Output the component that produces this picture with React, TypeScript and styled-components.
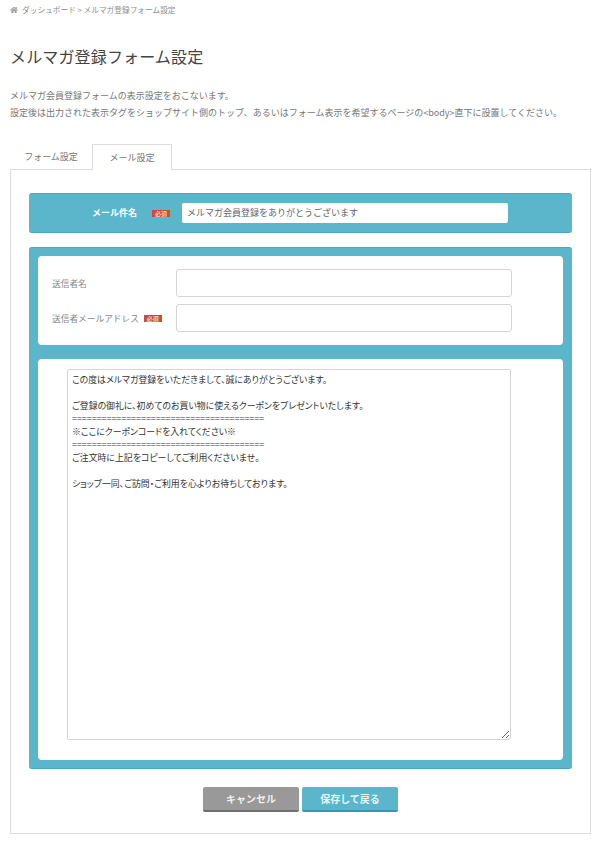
import React from 'react';
import styled, { createGlobalStyle } from 'styled-components';
import { FaHome } from 'react-icons/fa';

const GlobalStyle = createGlobalStyle`
  html, body {
    margin: 0;
    padding: 0;
    background: #fff;
  }
  body {
    font-family: "Noto Sans CJK JP", "Liberation Sans", sans-serif;
    color: #666;
  }
`;

const Page = styled.div`
  width: 600px;
  height: 847px;
  box-sizing: border-box;
  padding: 3px 10px 0;
  overflow: hidden;
`;

const Breadcrumb = styled.div`
  display: flex;
  align-items: center;
  gap: 4px;
  height: 13px;
  font-size: 7.7px;
  color: #8c8c8c;
  svg {
    color: #a0a0a0;
    width: 8px;
    height: 8px;
  }
`;

const Heading = styled.h1`
  margin: 28px 0 0;
  font-size: 16px;
  letter-spacing: 0.15px;
  line-height: 24px;
  font-weight: 400;
  color: #444;
`;

const Lead = styled.p`
  margin: 19px 0 0;
  font-size: 9px;
  line-height: 17px;
  color: #777;
`;

const Tabs = styled.div`
  display: flex;
  margin-top: 23px;
  height: 25px;
  position: relative;
  z-index: 1;
`;

const Tab = styled.div<{ $active?: boolean }>`
  box-sizing: border-box;
  width: ${p => (p.$active ? '80px' : '82px')};
  height: ${p => (p.$active ? '26px' : '25px')};
  display: flex;
  align-items: center;
  justify-content: center;
  font-size: 9px;
  color: #777;
  background: #fff;
  ${p => p.$active && 'border: 1px solid #ddd; border-bottom: none;'}
`;

const Panel = styled.div`
  box-sizing: border-box;
  width: 581px;
  height: 665px;
  border: 1px solid #ddd;
  padding: 23px 18px 0;
`;

const SubjectBar = styled.div`
  box-sizing: border-box;
  width: 543px;
  height: 40px;
  display: flex;
  align-items: center;
  background: #5bb6cc;
  border-top: 1px solid #45aac4;
  border-bottom: 1px solid #45aac4;
  border-radius: 3px;
`;

const SubjectLabel = styled.span`
  width: 108px;
  padding-bottom: 2px;
  text-align: right;
  font-size: 9px;
  font-weight: 700;
  color: #fff;
`;

const Required = styled.span<{ $gap: number }>`
  flex: none;
  width: 18px;
  height: 7px;
  margin-left: ${p => p.$gap}px;
  background: #c9502e;
  color: #fff;
  font-size: 6px;
  line-height: 7px;
  text-align: center;
`;

const SubjectInput = styled.input`
  box-sizing: border-box;
  width: 326px;
  height: 20px;
  margin-left: 12px;
  padding: 0 5px 2px;
  border: none;
  border-radius: 2px;
  background: #fff;
  font: 400 9px "Noto Sans CJK JP", sans-serif;
  color: #666;
  outline: none;
`;

const MailPanel = styled.div`
  box-sizing: border-box;
  width: 543px;
  height: 522px;
  margin-top: 14px;
  padding: 8px 9px;
  display: flex;
  flex-direction: column;
  gap: 14px;
  background: #5bb6cc;
  border-top: 1px solid #45aac4;
  border-bottom: 1px solid #45aac4;
  border-radius: 3px;
`;

const Card = styled.div`
  box-sizing: border-box;
  background: #fff;
  border-radius: 4px;
`;

const SenderCard = styled(Card)`
  height: 89px;
  padding: 13px 0 0 14px;
  display: flex;
  flex-direction: column;
  gap: 7px;
`;

const BodyCard = styled(Card)`
  flex: 1;
  padding: 10px 0 0 29px;
`;

const FieldRow = styled.div`
  display: flex;
  align-items: center;
`;

const FieldLabel = styled.div`
  width: 124px;
  display: flex;
  align-items: center;
  font-size: 8.7px;
  color: #888;
`;

const FieldInput = styled.input`
  box-sizing: border-box;
  width: 336px;
  height: 28px;
  border: 1px solid #d5d5d5;
  border-radius: 3px;
  background: #fff;
  outline: none;
`;

const BodyText = styled.textarea`
  display: block;
  box-sizing: border-box;
  width: 444px;
  height: 371px;
  padding: 3px 4px;
  border: 1px solid #d5d5d5;
  border-radius: 2px;
  font: 400 8.9px/13px "Noto Sans CJK JP", sans-serif;
  font-feature-settings: "palt";
  color: #333;
  outline: none;
  resize: both;
  overflow: hidden;
`;

const Actions = styled.div`
  display: flex;
  justify-content: center;
  gap: 3px;
  margin-top: 18px;
`;

const Button = styled.button<{ $primary?: boolean }>`
  box-sizing: border-box;
  width: 96px;
  height: 25px;
  padding: 0 0 1px;
  border: none;
  border-radius: 2px;
  border-bottom: 2px solid ${p => (p.$primary ? '#2f98b2' : '#6f6f6f')};
  background: ${p => (p.$primary ? '#5bb6cc' : '#999')};
  color: rgba(255, 255, 255, 0.88);
  font: 700 10px "Noto Sans CJK JP", sans-serif;
`;

const rule = '='.repeat(39);

const mailBody = `この度はメルマガ登録をいただきまして、誠にありがとうございます。

ご登録の御礼に、初めてのお買い物に使えるクーポンをプレゼントいたします。
${rule}
※ここにクーポンコードを入れてください※
${rule}
ご注文時に上記をコピーしてご利用くださいませ。

ショップ一同、ご訪問・ご利用を心よりお待ちしております。`;

export default function App() {
  return (
    <Page>
      <GlobalStyle />
      <Breadcrumb>
        <FaHome />
        <span>ダッシュボード &gt; メルマガ登録フォーム設定</span>
      </Breadcrumb>
      <Heading>メルマガ登録フォーム設定</Heading>
      <Lead>
        メルマガ会員登録フォームの表示設定をおこないます。
        <br />
        設定後は出力された表示タグをショップサイト側のトップ、あるいはフォーム表示を希望するページの&lt;body&gt;直下に設置してください。
      </Lead>
      <Tabs>
        <Tab>フォーム設定</Tab>
        <Tab $active>メール設定</Tab>
      </Tabs>
      <Panel>
        <SubjectBar>
          <SubjectLabel>メール件名</SubjectLabel>
          <Required $gap={15}>必須</Required>
          <SubjectInput defaultValue="メルマガ会員登録をありがとうございます" />
        </SubjectBar>
        <MailPanel>
          <SenderCard>
            <FieldRow>
              <FieldLabel>送信者名</FieldLabel>
              <FieldInput />
            </FieldRow>
            <FieldRow>
              <FieldLabel>
                送信者メールアドレス
                <Required $gap={5}>必須</Required>
              </FieldLabel>
              <FieldInput />
            </FieldRow>
          </SenderCard>
          <BodyCard>
            <BodyText defaultValue={mailBody} />
          </BodyCard>
        </MailPanel>
        <Actions>
          <Button>キャンセル</Button>
          <Button $primary>保存して戻る</Button>
        </Actions>
      </Panel>
    </Page>
  );
}
